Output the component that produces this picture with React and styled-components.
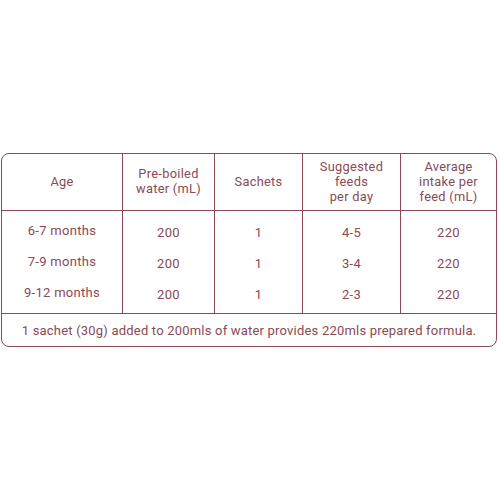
import React from 'react'
import styled, { createGlobalStyle } from 'styled-components'

const ink = '#8b4a55'
const cols = '121px 92px 88px 98px 1fr'

const Global = createGlobalStyle`
  body {
    margin: 0;
    background: #fff;
    font-family: Roboto, "Noto Sans", sans-serif;
    color: ${ink};
  }
`

const Page = styled.div`
  width: 500px;
  height: 500px;
  padding: 153px 3px 0 1px;
  box-sizing: border-box;
`

const Table = styled.div`
  border: 1.5px solid ${ink};
  border-radius: 8px;
  overflow: hidden;
`

const Row = styled.div`
  display: grid;
  grid-template-columns: ${cols};
  border-bottom: 1.5px solid ${ink};
`

const HeadCell = styled.div`
  height: 56px;
  padding-bottom: 2px;
  box-sizing: border-box;
  display: flex;
  align-items: center;
  justify-content: center;
  text-align: center;
  font-size: 12.8px;
  line-height: 15px;
  letter-spacing: 0.3px;
  border-right: ${p => (p.last ? 'none' : `1.5px solid ${ink}`)};
`

const Column = styled.div`
  display: flex;
  flex-direction: column;
  padding: 5px 0 4px;
  border-right: ${p => (p.last ? 'none' : `1.5px solid ${ink}`)};
`

const Value = styled.div`
  height: 31px;
  display: flex;
  align-items: center;
  justify-content: center;
  font-size: 13px;
  letter-spacing: 0.3px;
  transform: translateY(${p => (p.lift ? '-1px' : '1px')});
`

const Footer = styled.div`
  height: 32px;
  display: flex;
  align-items: center;
  justify-content: center;
  font-size: 13px;
  letter-spacing: 0.2px;
  padding-top: 1px;
  box-sizing: border-box;
`

const headers = [
  ['Age'],
  ['Pre-boiled', 'water (mL)'],
  ['Sachets'],
  ['Suggested', 'feeds', 'per day'],
  ['Average', 'intake per', 'feed (mL)'],
]

const data = [
  ['6-7 months', '7-9 months', '9-12 months'],
  ['200', '200', '200'],
  ['1', '1', '1'],
  ['4-5', '3-4', '2-3'],
  ['220', '220', '220'],
]

export default function App() {
  return (
    <Page>
      <Global />
      <Table>
        <Row>
          {headers.map((lines, i) => (
            <HeadCell key={i} last={i === headers.length - 1}>
              <div>
                {lines.map((l, j) => (
                  <div key={j}>{l}</div>
                ))}
              </div>
            </HeadCell>
          ))}
        </Row>
        <Row>
          {data.map((vals, i) => (
            <Column key={i} last={i === data.length - 1}>
              {vals.map((v, j) => (
                <Value key={j} lift={i === 0}>{v}</Value>
              ))}
            </Column>
          ))}
        </Row>
        <Footer>1 sachet (30g) added to 200mls of water provides 220mls prepared formula.</Footer>
      </Table>
    </Page>
  )
}
